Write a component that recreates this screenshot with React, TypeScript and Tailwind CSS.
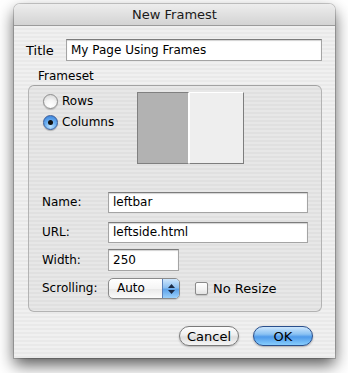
import React from "react";

const stripes =
  "bg-[repeating-linear-gradient(180deg,#f0f0f0_0px,#f0f0f0_2px,#e9e9e9_2px,#e9e9e9_4px)]";

function Radio({ checked }: { checked?: boolean }) {
  if (checked) {
    return (
      <div className="w-[15px] h-[15px] rounded-full border border-[#3b5d99] bg-[radial-gradient(circle_at_50%_80%,#bfe3ff_0%,#6aaef0_45%,#2f78d6_100%)] flex items-center justify-center shadow-[0_1px_1px_rgba(0,0,0,0.25)]">
        <div className="w-[5px] h-[5px] rounded-full bg-[#111]" />
      </div>
    );
  }
  return (
    <div className="w-[15px] h-[15px] rounded-full border border-[#8d8d8d] bg-[radial-gradient(circle_at_50%_80%,#ffffff_0%,#f4f4f4_45%,#cfcfcf_100%)] shadow-[0_1px_1px_rgba(0,0,0,0.2)]" />
  );
}

function TextField({ value, w, h }: { value: string; w: string; h: string }) {
  return (
    <div
      className={`${w} ${h} bg-white border border-[#a4a4a4] border-t-[#7c7c7c] shadow-[inset_0_1px_1px_rgba(0,0,0,0.18)] flex items-center pl-[4px]`}
    >
      {value}
    </div>
  );
}

function FormRow({ label, children, mt }: { label: string; children: React.ReactNode; mt: string }) {
  return (
    <div className={`flex items-center ${mt}`}>
      <div className="w-[79px] pl-[13px]">{label}</div>
      {children}
    </div>
  );
}

export default function App() {
  return (
    <div className="w-[348px] h-[373px] bg-white pt-[4px] pl-[14px] font-['DejaVu_Sans',sans-serif] text-[12px] text-black leading-[15px]">
      <div className="w-[321px] h-[354px] rounded-t-[6px] overflow-hidden flex flex-col shadow-[0_0_0_1px_rgba(0,0,0,0.18),0_7px_16px_rgba(0,0,0,0.65)]">
        {/* title bar */}
        <div className="h-[22px] shrink-0 bg-[linear-gradient(180deg,#ededed_0%,#e0e0e0_50%,#d3d3d3_100%)] border-b border-[#9b9b9b] flex items-center justify-center text-[13px] text-[#1a1a1a]">
          New Framest
        </div>
        {/* body */}
        <div className={`flex-1 ${stripes} flex flex-col pt-[13px]`}>
          <div className="flex items-center">
            <div className="w-[52px] pl-[12px] text-[13px]">Title</div>
            <TextField value="My Page Using Frames" w="w-[256px]" h="h-[22px]" />
          </div>
          <div className="pl-[24px] mt-[8px]">Frameset</div>
          <div className="ml-[14px] mt-[1px] w-[294px] h-[227px] rounded-[6px] border border-[#b3b3b3] border-t-[#a2a2a2] bg-black/[0.035] flex flex-col pt-[6px]">
            <div className="flex">
              <div className="w-[108px] pl-[14px] pt-[2px] flex flex-col gap-[6px]">
                <div className="flex items-center gap-[4px] h-[15px]">
                  <Radio />
                  <span>Rows</span>
                </div>
                <div className="flex items-center gap-[4px] h-[15px]">
                  <Radio checked />
                  <span>Columns</span>
                </div>
              </div>
              <div className="flex h-[72px]">
                <div className="w-[52px] bg-[#b2b2b2] border border-[#808080] border-r-white" />
                <div className="w-[55px] bg-[#eeeeee] border border-white border-r-[#7d7d7d] border-b-[#7d7d7d]" />
              </div>
            </div>
            <FormRow label="Name:" mt="mt-[28px]">
              <TextField value="leftbar" w="w-[200px]" h="h-[21px]" />
            </FormRow>
            <FormRow label="URL:" mt="mt-[9px]">
              <TextField value="leftside.html" w="w-[200px]" h="h-[21px]" />
            </FormRow>
            <FormRow label="Width:" mt="mt-[6px]">
              <TextField value="250" w="w-[71px]" h="h-[22px]" />
            </FormRow>
            <FormRow label="Scrolling:" mt="mt-[7px]">
              <div className="w-[72px] h-[21px] rounded-[5px] border border-[#8a8a8a] bg-[linear-gradient(180deg,#ffffff_0%,#f5f5f5_50%,#e8e8e8_51%,#fbfbfb_100%)] flex items-stretch overflow-hidden shadow-[0_1px_1px_rgba(0,0,0,0.15)]">
                <div className="flex-1 flex items-center pl-[8px]">Auto</div>
                <div className="w-[17px] bg-[linear-gradient(180deg,#cfe6fc_0%,#8dc0f1_45%,#5ea3ea_55%,#9bd0fb_100%)] border-l border-[#5a7fb8] flex flex-col items-center justify-center gap-[2px]">
                  <svg width="7" height="4" viewBox="0 0 7 4"><path d="M0 4 L3.5 0 L7 4 Z" fill="#1b2a44" /></svg>
                  <svg width="7" height="4" viewBox="0 0 7 4"><path d="M0 0 L3.5 4 L7 0 Z" fill="#1b2a44" /></svg>
                </div>
              </div>
              <div className="ml-[15px] w-[13px] h-[13px] rounded-[2px] border border-[#8a8a8a] bg-[linear-gradient(180deg,#ffffff_0%,#f2f2f2_60%,#e2e2e2_100%)] shadow-[0_1px_1px_rgba(0,0,0,0.15)]" />
              <span className="ml-[5px] text-[13px]">No Resize</span>
            </FormRow>
          </div>
          <div className="flex justify-end pr-[22px] gap-[14px] mt-[14px]">
            <div className="w-[60px] h-[20px] rounded-full border border-[#7a7a7a] bg-[linear-gradient(180deg,#fdfdfd_0%,#eeeeee_45%,#dcdcdc_55%,#f6f6f6_100%)] flex items-center justify-center text-[13px] shadow-[0_1px_2px_rgba(0,0,0,0.25)]">
              Cancel
            </div>
            <div className="w-[60px] h-[20px] rounded-full border border-[#2a4f8c] bg-[linear-gradient(180deg,#cde6fd_0%,#8ac2f3_40%,#4f9aea_55%,#86cdfd_100%)] flex items-center justify-center text-[13px] shadow-[0_1px_2px_rgba(0,0,0,0.3)]">
              OK
            </div>
          </div>
        </div>
      </div>
    </div>
  );
}
